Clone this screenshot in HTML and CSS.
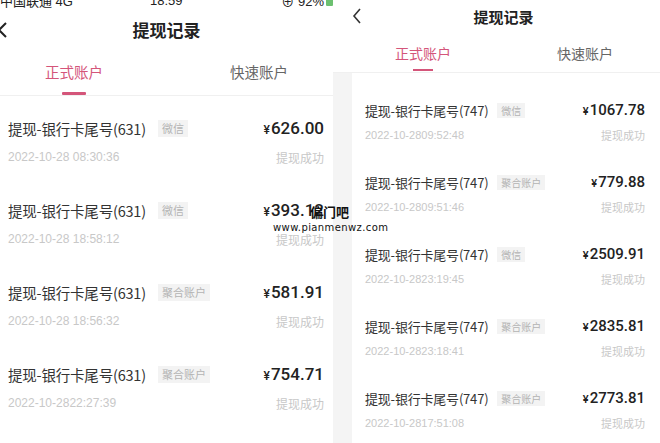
FILE: index.html
```html
<!DOCTYPE html>
<html lang="zh">
<head>
<meta charset="utf-8">
<link rel="stylesheet" href="styles.css">
</head>
<body>
<div class="page">
  <section class="left">
    <div class="status">
      <div class="status-in">
        <span class="carrier">中国联通 4G</span>
        <span class="time">18:59</span>
        <span class="batt">⊕ 92%<i class="batt-icon"></i></span>
      </div>
    </div>
    <div class="lhead">
      <svg class="lback" width="10" height="18" viewBox="0 0 10 18"><path d="M6 2 L-1 9 L6 16" fill="none" stroke="#222" stroke-width="2"/></svg>
      <span class="ltitle">提现记录</span>
    </div>
    <div class="ltabs">
      <div class="ltab on">正式账户<i class="lbar"></i></div>
      <div class="ltab">快速账户</div>
    </div>
    <div class="llist">
      <div class="lrow">
        <div class="line1"><span class="lname">提现-银行卡尾号(631)</span><span class="ltag">微信</span><span class="lamt"><small>¥</small>626.00</span></div>
        <div class="line2"><span>2022-10-28 08:30:36</span><span>提现成功</span></div>
      </div>
      <div class="lrow">
        <div class="line1"><span class="lname">提现-银行卡尾号(631)</span><span class="ltag">微信</span><span class="lamt"><small>¥</small>393.12</span></div>
        <div class="line2"><span>2022-10-28 18:58:12</span><span>提现成功</span></div>
      </div>
      <div class="lrow">
        <div class="line1"><span class="lname">提现-银行卡尾号(631)</span><span class="ltag">聚合账户</span><span class="lamt"><small>¥</small>581.91</span></div>
        <div class="line2"><span>2022-10-28 18:56:32</span><span>提现成功</span></div>
      </div>
      <div class="lrow">
        <div class="line1"><span class="lname">提现-银行卡尾号(631)</span><span class="ltag">聚合账户</span><span class="lamt"><small>¥</small>754.71</span></div>
        <div class="line2"><span>2022-10-2822:27:39</span><span>提现成功</span></div>
      </div>
    </div>
  </section>
  <section class="right">
    <div class="rhead">
      <svg class="rback" width="10" height="16" viewBox="0 0 10 16"><path d="M8 1 L2 8 L8 15" fill="none" stroke="#333" stroke-width="1.6"/></svg>
      <span class="rtitle">提现记录</span>
    </div>
    <div class="rtabs">
      <div class="rtab on">正式账户<i class="rbar"></i></div>
      <div class="rtab">快速账户</div>
    </div>
    <div class="rbody">
      <div class="rcard">
        <div class="rrow">
          <div class="line1"><span class="rname">提现-银行卡尾号(747)</span><span class="rtag">微信</span><span class="ramt"><small>¥</small>1067.78</span></div>
          <div class="line2"><span>2022-10-2809:52:48</span><span>提现成功</span></div>
        </div>
        <div class="rrow">
          <div class="line1"><span class="rname">提现-银行卡尾号(747)</span><span class="rtag">聚合账户</span><span class="ramt"><small>¥</small>779.88</span></div>
          <div class="line2"><span>2022-10-2809:51:46</span><span>提现成功</span></div>
        </div>
        <div class="rrow">
          <div class="line1"><span class="rname">提现-银行卡尾号(747)</span><span class="rtag">微信</span><span class="ramt"><small>¥</small>2509.91</span></div>
          <div class="line2"><span>2022-10-2823:19:45</span><span>提现成功</span></div>
        </div>
        <div class="rrow">
          <div class="line1"><span class="rname">提现-银行卡尾号(747)</span><span class="rtag">聚合账户</span><span class="ramt"><small>¥</small>2835.81</span></div>
          <div class="line2"><span>2022-10-2823:18:41</span><span>提现成功</span></div>
        </div>
        <div class="rrow">
          <div class="line1"><span class="rname">提现-银行卡尾号(747)</span><span class="rtag">聚合账户</span><span class="ramt"><small>¥</small>2773.81</span></div>
          <div class="line2"><span>2022-10-2817:51:08</span><span>提现成功</span></div>
        </div>
      </div>
    </div>
  </section>
  <div class="watermark">
    <div class="wm1">偏门吧</div>
    <div class="wm2">www.pianmenwz.com</div>
  </div>
</div>
</body>
</html>
```
FILE: styles.css
```css
* { box-sizing: border-box; margin: 0; padding: 0; }
html, body { width: 660px; height: 443px; overflow: hidden; background: #fff; }
body { font-family: "Noto Sans CJK SC", "Noto Sans", sans-serif; color: #333; }
.page { position: relative; display: flex; width: 660px; height: 443px; overflow: hidden; }

/* left screenshot */
.left { width: 333px; flex: none; display: flex; flex-direction: column; background: #fff; }
.status { height: 8px; overflow: hidden; }
.status-in { display: flex; align-items: center; height: 16px; margin-top: -8px; font-family: "Liberation Sans", "Noto Sans CJK SC", sans-serif; font-size: 13px; color: #222; }
.carrier { width: 150px; flex: none; }
.time { flex: none; }
.batt { margin-left: auto; display: flex; align-items: center; gap: 2px; }
.batt-icon { display: inline-block; width: 7px; height: 12px; background: #6cc070; border-radius: 1px; }
.lhead { height: 44px; position: relative; display: flex; align-items: center; justify-content: center; }
.lback { position: absolute; left: 0; top: 13px; }
.ltitle { font-size: 17px; font-weight: 700; color: #222; line-height: 20px; }
.ltabs { height: 44px; display: flex; justify-content: space-between; padding: 10px 45px 0 45px; border-bottom: 1px solid #f0f0f0; }
.ltab { position: relative; font-size: 14.5px; line-height: 20px; color: #666; }
.ltab.on { color: #d4557a; }
.lbar { position: absolute; left: 17px; top: 30px; width: 24px; height: 3px; border-radius: 1px; background: #d4557a; }
.llist { flex: 1; }
.lrow { height: 82px; padding: 22px 9px 0 8px; }
.line1 { display: flex; align-items: center; height: 20px; }
.line2 { display: flex; justify-content: space-between; align-items: center; height: 20px; font-family: "Liberation Sans", "Noto Sans CJK SC", sans-serif; color: #c8c8c8; }
.lrow .line2 { margin-top: 9px; font-size: 12px; }
.lname { font-size: 14.5px; color: #333; letter-spacing: -0.2px; }
.ltag { margin-left: 12px; padding: 0 4px; height: 17px; line-height: 17px; font-size: 11px; color: #b3b3b3; background: #f3f3f3; }
.lamt { margin-left: auto; font-family: Roboto, "Liberation Sans", sans-serif; font-weight: 500; font-size: 17px; color: #222; }
.lamt small { font-size: 12px; margin-right: 1px; }

/* right screenshot */
.right { flex: 1; display: flex; flex-direction: column; background: #fff; }
.rhead { height: 34px; position: relative; display: flex; align-items: center; justify-content: center; padding-left: 14px; }
.rback { position: absolute; left: 19px; top: 8px; }
.rtitle { font-size: 15px; font-weight: 700; color: #222; line-height: 20px; }
.rtabs { height: 38px; display: flex; justify-content: space-between; padding: 9px 47px 0 62px; }
.rtab { position: relative; font-size: 14px; line-height: 20px; color: #666; }
.rtab.on { color: #d4557a; }
.rbar { position: absolute; left: 18px; top: 26px; width: 20px; height: 2px; background: #d4557a; }
.rbody { flex: 1; background: #f4f4f4; padding-left: 19px; border-top: 1px solid #f0f0f0; }
.rcard { background: #fff; height: 100%; }
.rrow { height: 72px; padding: 27px 15px 0 13px; }
.rrow .line2 { margin-top: 5px; font-size: 11px; }
.rname { font-size: 13px; color: #333; letter-spacing: -0.2px; }
.rtag { margin-left: 9px; padding: 0 4px; height: 15px; line-height: 15px; font-size: 10px; color: #b3b3b3; background: #f3f3f3; }
.ramt { margin-left: auto; font-family: Roboto, "Liberation Sans", sans-serif; font-weight: 500; font-size: 15px; color: #222; }
.ramt small { font-size: 11px; margin-right: 1px; }

/* watermark overlay */
.watermark { position: absolute; left: 273px; top: 203px; width: 120px; }
.wm1 { margin-left: 37px; font-size: 13px; font-weight: 700; line-height: 18px; color: #111; }
.wm2 { font-family: "DejaVu Sans", sans-serif; font-size: 10px; line-height: 14px; letter-spacing: 0.4px; color: #111; }
```
